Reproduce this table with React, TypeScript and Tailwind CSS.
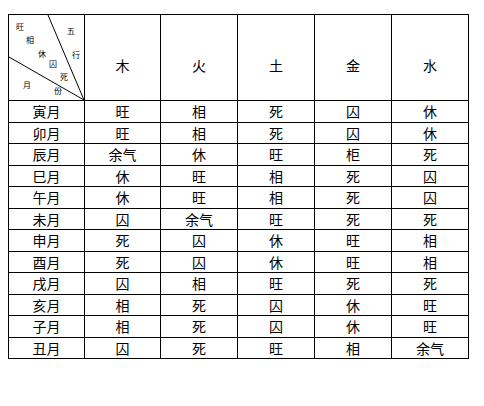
const elements = ['木', '火', '土', '金', '水'];

const rows: [string, string[]][] = [
  ['寅月', ['旺', '相', '死', '囚', '休']],
  ['卯月', ['旺', '相', '死', '囚', '休']],
  ['辰月', ['余气', '休', '旺', '柜', '死']],
  ['巳月', ['休', '旺', '相', '死', '囚']],
  ['午月', ['休', '旺', '相', '死', '囚']],
  ['未月', ['囚', '余气', '旺', '死', '死']],
  ['申月', ['死', '囚', '休', '旺', '相']],
  ['酉月', ['死', '囚', '休', '旺', '相']],
  ['戌月', ['囚', '相', '旺', '死', '死']],
  ['亥月', ['相', '死', '囚', '休', '旺']],
  ['子月', ['相', '死', '囚', '休', '旺']],
  ['丑月', ['囚', '死', '旺', '相', '余气']],
];

// small labels inside the split header cell (x, y relative to the cell)
const corner = [
  { t: '旺', x: 7, y: 8 },
  { t: '相', x: 17, y: 21 },
  { t: '休', x: 29, y: 35 },
  { t: '囚', x: 40, y: 45 },
  { t: '死', x: 51, y: 58 },
  { t: '五', x: 58, y: 12 },
  { t: '行', x: 63, y: 36 },
  { t: '月', x: 14, y: 66 },
  { t: '份', x: 45, y: 72 },
];

const widths = ['w-[76px]', 'w-[76px]', 'w-[77px]', 'w-[77px]', 'w-[77px]', 'w-[77px]'];

export default function App() {
  return (
    <div className="w-[484px] h-[406px] bg-white text-black font-['Noto_Sans_CJK_SC','Noto_Sans',sans-serif] overflow-hidden">
      <div className="ml-[8px] pt-[14px]">
        <div className="inline-flex flex-col border-t border-l border-black">
          <div className="flex h-[86px]">
            <div className={`${widths[0]} relative border-r border-b border-black shrink-0`}>
              <svg className="absolute inset-0" width="75" height="85" viewBox="0 0 75 85">
                <line x1="39" y1="0" x2="75" y2="85" stroke="black" strokeWidth="1" />
                <line x1="0" y1="42" x2="75" y2="85" stroke="black" strokeWidth="1" />
              </svg>
              {corner.map((c) => (
                <span
                  key={c.t}
                  className="absolute text-[8px] leading-none"
                  style={{ left: c.x, top: c.y }}
                >
                  {c.t}
                </span>
              ))}
            </div>
            {elements.map((e, i) => (
              <div
                key={e}
                className={`${widths[i + 1]} shrink-0 border-r border-b border-black flex justify-center pt-[43px] text-[14px] leading-none`}
              >
                {e}
              </div>
            ))}
          </div>
          {rows.map(([month, vals]) => (
            <div key={month} className="flex h-[21.5px]">
              <div className={`${widths[0]} shrink-0 border-r border-b border-black flex items-center justify-center text-[14px] leading-none`}>
                {month}
              </div>
              {vals.map((v, i) => (
                <div
                  key={i}
                  className={`${widths[i + 1]} shrink-0 border-r border-b border-black flex items-center justify-center text-[14px] leading-none`}
                >
                  {v}
                </div>
              ))}
            </div>
          ))}
        </div>
      </div>
    </div>
  );
}
